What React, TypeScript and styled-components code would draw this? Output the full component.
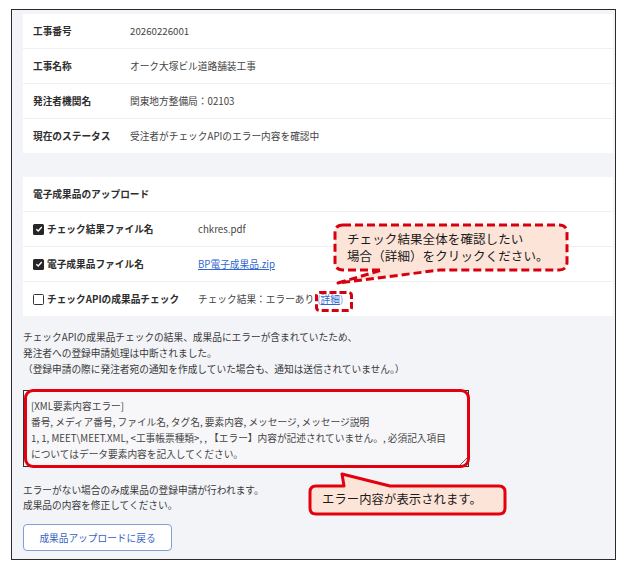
import React from 'react';
import styled, { createGlobalStyle } from 'styled-components';

const GlobalStyle = createGlobalStyle`
  html, body {
    margin: 0;
    padding: 0;
    background: #ffffff;
  }
  body {
    font-family: "Noto Sans CJK JP", "Noto Sans", sans-serif;
    color: #333333;
  }
`;

const Page = styled.div`
  position: relative;
  width: 627px;
  height: 567px;
  padding: 9px 0 0 11px;
  box-sizing: border-box;
`;

const Frame = styled.div`
  width: 605px;
  height: 551px;
  box-sizing: border-box;
  border: 1px solid #2b2b2b;
  background: #f3f4f7;
  padding: 4px 2px 7px 11px;
  display: flex;
  flex-direction: column;
  font-size: 9.7px;
`;

const Table = styled.div<{ $gap?: number }>`
  background: #ffffff;
  display: flex;
  flex-direction: column;
  margin-top: ${(p) => p.$gap ?? 0}px;
`;

const Row = styled.div<{ $valueX: number }>`
  height: 34px;
  display: grid;
  grid-template-columns: ${(p) => p.$valueX}px 1fr;
  align-items: center;
  padding-left: 10px;
  border-bottom: 1px solid #eef0f3;

  &:last-child {
    border-bottom: none;
  }
`;

const Label = styled.div`
  font-weight: 700;
  color: #2e2e2e;
  display: flex;
  align-items: center;
  gap: 3px;
`;

const Value = styled.div`
  color: #444444;
  display: flex;
  align-items: center;
`;

const Link = styled.a`
  color: #2f66d0;
  text-decoration: underline;
  cursor: pointer;
`;

const Paren = styled.span`
  color: #6f8fd0;
  margin-left: 3px;
`;

const Box = styled.span<{ $checked?: boolean }>`
  width: 11px;
  height: 11px;
  box-sizing: border-box;
  border-radius: 1.5px;
  background: ${(p) => (p.$checked ? '#262626' : '#ffffff')};
  border: ${(p) => (p.$checked ? 'none' : '1.3px solid #333333')};
  display: inline-flex;
  align-items: center;
  justify-content: center;
  flex: none;
`;

const Note = styled.p<{ $top: number; $lh: number }>`
  margin: ${(p) => p.$top}px 0 0 0;
  line-height: ${(p) => p.$lh}px;
  color: #3a3a3a;
`;

const TextWrap = styled.div`
  position: relative;
  width: 446px;
  margin-top: 13px;
`;

const ErrorText = styled.textarea`
  display: block;
  width: 446px;
  height: 77px;
  box-sizing: border-box;
  border: 1px solid #333333;
  background: #f7f7f9;
  padding: 7px 6px 2px 7px;
  font-family: "Noto Sans CJK JP", "Noto Sans", sans-serif;
  font-size: 9.7px;
  line-height: 16px;
  color: #444444;
  resize: both;
  overflow: hidden;
  outline: none;
`;

const RedFrame = styled.div`
  position: absolute;
  inset: -1px -1px -1px 1px;
  border: 3px solid #e3000f;
  border-radius: 9px;
  pointer-events: none;
`;

const BackButton = styled.button`
  margin-top: 11px;
  width: 149px;
  height: 27px;
  border: 1px solid #7f9fd8;
  border-radius: 4px;
  background: #ffffff;
  color: #3563c4;
  font-family: "Noto Sans CJK JP", "Noto Sans", sans-serif;
  font-size: 9.7px;
  cursor: pointer;
`;

const Callout = styled.div<{ $x: number; $y: number; $w: number; $h: number }>`
  position: absolute;
  left: ${(p) => p.$x}px;
  top: ${(p) => p.$y}px;
  width: ${(p) => p.$w}px;
  height: ${(p) => p.$h}px;
  pointer-events: none;

  svg {
    position: absolute;
    inset: 0;
  }
`;

const CalloutText = styled.div<{ $x: number; $y: number; $size: number; $lh: number }>`
  position: absolute;
  left: ${(p) => p.$x}px;
  top: ${(p) => p.$y}px;
  font-size: ${(p) => p.$size}px;
  line-height: ${(p) => p.$lh}px;
  color: #1a1a1a;
  white-space: nowrap;
  letter-spacing: 0.1px;
`;

const Check = () => (
  <svg width="8" height="8" viewBox="0 0 8 8">
    <path d="M1.3 4.2 L3.2 6 L6.8 2" fill="none" stroke="#ffffff" strokeWidth="1.4" />
  </svg>
);

const errorBody =
  '[XML要素内容エラー]\n' +
  '番号, メディア番号, ファイル名, タグ名, 要素内容, メッセージ, メッセージ説明\n' +
  '1, 1, MEET\\MEET.XML, <工事帳票種類>, , 【エラー】内容が記述されていません。, 必須記入項目\n' +
  'についてはデータ要素内容を記入してください。';

const summary = [
  { label: '工事番号', value: '20260226001' },
  { label: '工事名称', value: 'オーク大塚ビル道路舗装工事' },
  { label: '発注者機関名', value: '関東地方整備局：02103' },
  { label: '現在のステータス', value: '受注者がチェックAPIのエラー内容を確認中' },
];

const App: React.FC = () => (
  <Page>
    <GlobalStyle />
    <Frame>
      <Table>
        {summary.map((r) => (
          <Row key={r.label} $valueX={97}>
            <Label>{r.label}</Label>
            <Value>{r.value}</Value>
          </Row>
        ))}
      </Table>

      <Table $gap={24}>
        <Row $valueX={165}>
          <Label>電子成果品のアップロード</Label>
        </Row>
        <Row $valueX={165}>
          <Label>
            <Box $checked>
              <Check />
            </Box>
            チェック結果ファイル名
          </Label>
          <Value>chkres.pdf</Value>
        </Row>
        <Row $valueX={165}>
          <Label>
            <Box $checked>
              <Check />
            </Box>
            電子成果品ファイル名
          </Label>
          <Value>
            <Link>BP電子成果品.zip</Link>
          </Value>
        </Row>
        <Row $valueX={165}>
          <Label>
            <Box />
            チェックAPIの成果品チェック
          </Label>
          <Value>
            チェック結果：エラーあり
            <Paren>(</Paren>
            <Link>詳細</Link>
            <Paren as="span" style={{ marginLeft: 0 }}>)</Paren>
          </Value>
        </Row>
      </Table>

      <Note $top={13} $lh={16}>
        チェックAPIの成果品チェックの結果、成果品にエラーが含まれていたため、
        <br />
        発注者への登録申請処理は中断されました。
        <br />
        （登録申請の際に発注者宛の通知を作成していた場合も、通知は送信されていません。）
      </Note>

      <TextWrap>
        <ErrorText readOnly value={errorBody} />
        <RedFrame />
      </TextWrap>

      <Note $top={16} $lh={15}>
        エラーがない場合のみ成果品の登録申請が行われます。
        <br />
        成果品の内容を修正してください。
      </Note>

      <div>
        <BackButton>成果品アップロードに戻る</BackButton>
      </div>
    </Frame>

    {/* dashed note pointing at the 詳細 link */}
    <Callout $x={330} $y={220} $w={242} $h={68}>
      <svg width="242" height="68" viewBox="0 0 242 68">
        <path
          d="M13 5 H229 Q237 5 237 13 V42 Q237 50 229 50 H110 L8 63 L52 50 H13 Q5 50 5 42 V13 Q5 5 13 5 Z"
          fill="#fde4d8"
          stroke="#d6000f"
          strokeWidth="3"
          strokeDasharray="8 4"
          strokeLinejoin="round"
        />
      </svg>
      <CalloutText $x={17} $y={10} $size={12.5} $lh={17}>
        チェック結果全体を確認したい
        <br />
        場合（詳細）をクリックください。
      </CalloutText>
    </Callout>

    <Callout $x={312} $y={289} $w={44} $h={26}>
      <svg width="44" height="26" viewBox="0 0 44 26">
        <rect
          x="4.5"
          y="3.5"
          width="35"
          height="18"
          rx="3"
          fill="none"
          stroke="#d6000f"
          strokeWidth="3"
          strokeDasharray="7 3"
        />
      </svg>
    </Callout>

    {/* solid note under the error box */}
    <Callout $x={305} $y={470} $w={206} $h={49}>
      <svg width="206" height="49" viewBox="0 0 206 49">
        <path
          d="M11 16 H39 L37 4 L85 16 H194 Q200 16 200 22 V38 Q200 44 194 44 H11 Q5 44 5 38 V22 Q5 16 11 16 Z"
          fill="#fde4d8"
          stroke="#e3000f"
          strokeWidth="3"
          strokeLinejoin="round"
        />
      </svg>
      <CalloutText $x={17} $y={21} $size={12.3} $lh={17}>
        エラー内容が表示されます。
      </CalloutText>
    </Callout>
  </Page>
);

export default App;
